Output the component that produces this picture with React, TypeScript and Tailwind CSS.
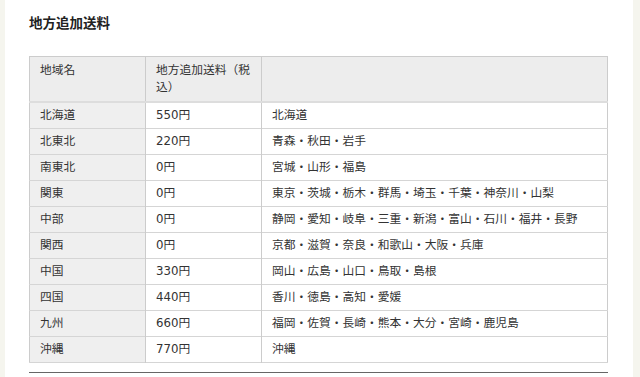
const rows: [string, string, string][] = [
  ["北海道", "550円", "北海道"],
  ["北東北", "220円", "青森・秋田・岩手"],
  ["南東北", "0円", "宮城・山形・福島"],
  ["関東", "0円", "東京・茨城・栃木・群馬・埼玉・千葉・神奈川・山梨"],
  ["中部", "0円", "静岡・愛知・岐阜・三重・新潟・富山・石川・福井・長野"],
  ["関西", "0円", "京都・滋賀・奈良・和歌山・大阪・兵庫"],
  ["中国", "330円", "岡山・広島・山口・鳥取・島根"],
  ["四国", "440円", "香川・徳島・高知・愛媛"],
  ["九州", "660円", "福岡・佐賀・長崎・熊本・大分・宮崎・鹿児島"],
  ["沖縄", "770円", "沖縄"],
]

export default function App() {
  return (
    <div className="flex w-[640px] h-[377px] overflow-hidden bg-[#f5f5ee] font-['DejaVu_Sans','Noto_Sans_CJK_JP',sans-serif] text-[#333]">
      <div className="w-[5px] shrink-0" />
      <div className="flex-1 bg-white pl-[24px] pr-[25px] pt-[14px]">
        <h2 className="text-[13.5px] font-bold leading-[18px] text-[#222]">地方追加送料</h2>
        <table className="mt-[24px] w-[579px] table-fixed border-collapse border border-[#ccc] text-[11.75px] leading-[17px]">
          <colgroup>
            <col className="w-[116px]" />
            <col className="w-[116px]" />
            <col />
          </colgroup>
          <thead>
            <tr className="bg-[#ededed] border-b-2 border-[#ddd]">
              <th className="px-[10px] py-[5px] text-left align-top font-normal border-r border-[#ccc]">地域名</th>
              <th className="px-[10px] py-[5px] text-left align-top font-normal border-r border-[#ccc]">地方追加送料（税込）</th>
              <th className="px-[10px] py-[5px]" />
            </tr>
          </thead>
          <tbody>
            {rows.map(([area, fee, prefs]) => (
              <tr key={area} className="border-b border-[#d5d5d5] h-[26px]">
                <td className="px-[10px] py-[4px] bg-[#efefef] border-r border-[#ccc]">{area}</td>
                <td className="px-[10px] py-[4px] border-r border-[#ccc]">{fee}</td>
                <td className="px-[10px] py-[4px]">{prefs}</td>
              </tr>
            ))}
          </tbody>
        </table>
        <div className="mt-[9px] w-[579px] border-t border-[#666]" />
      </div>
      <div className="w-[7px] shrink-0" />
    </div>
  )
}
